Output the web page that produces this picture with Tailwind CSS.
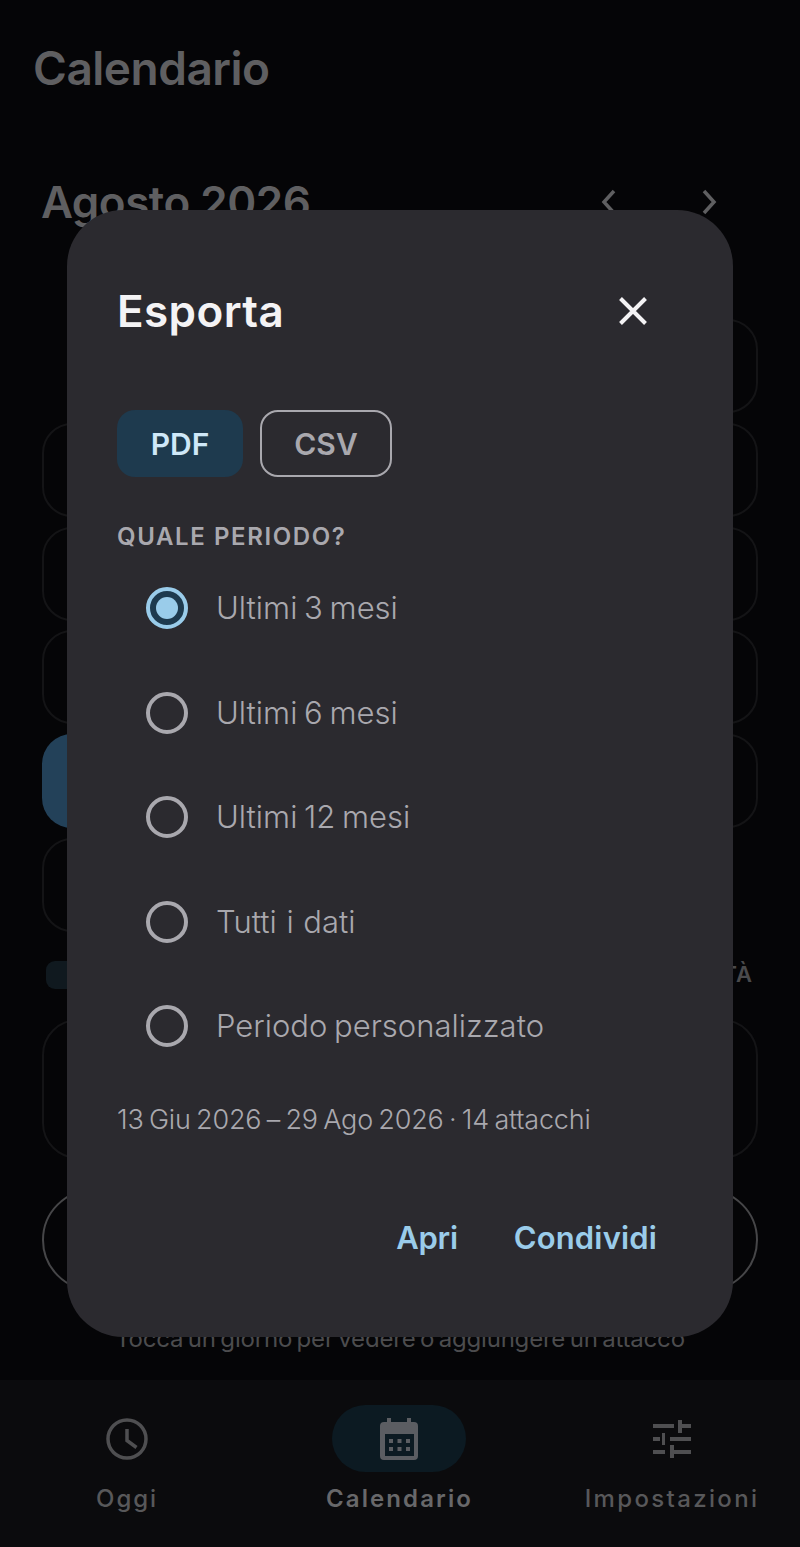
<!DOCTYPE html>
<html lang="it">
<head>
    <meta charset="UTF-8">
    <meta name="viewport" content="width=device-width, initial-scale=1.0">
    <title>Calendario</title>
    <script src="https://cdn.jsdelivr.net/npm/@tailwindcss/browser@4"></script>
</head>
<body class="bg-[#050507] font-['Inter',sans-serif]">
<div class="relative w-[800px] h-[1547px] overflow-hidden flex flex-col">

    <!-- Page behind the dialog -->
    <div class="flex-1 min-h-0 px-[42px] flex flex-col">
        <h1 class="-ml-[9px] pt-[41px] h-[130px] text-[46px] leading-[54px] font-semibold tracking-[-0.5px] text-[#5f5f61]">Calendario</h1>
        <div class="-ml-[1px] flex items-center justify-between h-[60px] mt-[42px] shrink-0">
            <span class="text-[44px] font-semibold tracking-[-0.5px] text-[#5f5f61]">Agosto 2026</span>
            <div class="flex gap-[76px] pr-[37px]">
                <svg class="w-6 h-8 text-[#5f5f61]" viewBox="0 0 24 32" fill="none" stroke="currentColor" stroke-width="3.5"><path d="M17 5 7 16l10 11"/></svg>
                <svg class="w-6 h-8 text-[#5f5f61]" viewBox="0 0 24 32" fill="none" stroke="currentColor" stroke-width="3.5"><path d="M7 5l10 11L7 27"/></svg>
            </div>
        </div>

        <div class="mt-[87px] grid grid-cols-7 gap-x-[10px] gap-y-[9.8px] auto-rows-[94px] shrink-0">
            <div class="col-start-6 rounded-[30px] border-2 border-[#141416]"></div>
            <div class="rounded-[30px] border-2 border-[#141416]"></div>
            <div class="col-start-1 rounded-[30px] border-2 border-[#141416]"></div>
            <div class="col-start-7 rounded-[30px] border-2 border-[#141416]"></div>
            <div class="col-start-1 rounded-[30px] border-2 border-[#141416]"></div>
            <div class="col-start-7 rounded-[30px] border-2 border-[#141416]"></div>
            <div class="col-start-1 rounded-[30px] border-2 border-[#141416]"></div>
            <div class="col-start-7 rounded-[30px] border-2 border-[#141416]"></div>
            <div class="col-start-1 rounded-[30px] bg-[#234159]"></div>
            <div class="col-start-7 rounded-[30px] border-2 border-[#141416]"></div>
            <div class="col-start-1 rounded-[30px] border-2 border-[#141416]"></div>
        </div>

        <div class="mt-[29px] h-[28px] flex items-center justify-between pl-[4px] pr-[5px] shrink-0">
            <span class="w-[60px] h-[28px] rounded-[9px] bg-[#10191f]"></span>
            <span class="text-[22px] font-semibold tracking-[1px] text-[#4a4a4c]">TÀ</span>
        </div>

        <div class="mt-[30px] h-[140px] shrink-0 rounded-[36px] border-2 border-[#141416]"></div>
        <div class="mt-[30px] h-[102px] shrink-0 rounded-full border-2 border-[#464648]"></div>
        <p class="mt-[33px] text-center text-[24px] leading-[30px] tracking-[-0.2px] [word-spacing:-2px] text-[#4c4c4e]">Tocca un giorno per vedere o aggiungere un attacco</p>
    </div>

    <!-- Bottom nav -->
    <nav class="h-[167px] shrink-0 bg-[#0b0b0d] grid grid-cols-[254px_290px_256px] pt-[25px]">
        <div class="flex flex-col items-center">
            <div class="h-[67px] flex items-center">
                <svg class="w-[48px] h-[48px] text-[#4f4f51]" viewBox="0 0 48 48" fill="none" stroke="currentColor" stroke-width="3.5"><circle cx="24" cy="24" r="19"/><path d="M24 14v11.5l9.5 7"/></svg>
            </div>
            <span class="mt-[11px] text-[24px] leading-[32px] font-medium tracking-[1.9px] text-[#58585a]">Oggi</span>
        </div>
        <div class="flex flex-col items-center">
            <div class="w-[134px] h-[67px] rounded-full bg-[#0c1a22] flex items-center justify-center">
                <svg class="w-[48px] h-[48px]" viewBox="0 0 48 48">
                    <path fill="#5b5d62" d="M12 3h4v4h16V3h4v4h3a4 4 0 0 1 4 4v30a4 4 0 0 1-4 4H9a4 4 0 0 1-4-4V11a4 4 0 0 1 4-4h3z"/>
                    <rect fill="#0c1a22" x="10" y="19" width="29" height="22"/>
                    <path fill="#5b5d62" d="M14 24h4v4h-4zm8.500 0h4v4h-4zm8.500 0h4v4h-4zM14 32h4v4h-4zm8.500 0h4v4h-4zm8.500 0h4v4h-4z"/>
                </svg>
            </div>
            <span class="mt-[11px] ml-[1px] text-[24px] leading-[32px] font-semibold tracking-[2.1px] text-[#68686a]">Calendario</span>
        </div>
        <div class="flex flex-col items-center">
            <div class="h-[67px] flex items-center">
                <svg class="w-[48px] h-[48px] text-[#4f4f51]" viewBox="0 0 48 48" fill="currentColor"><path d="M5 9h21v4H5zm25-4h4v4h9v4h-9v5h-4zM5 22h7v4H5zm9-4h3v12h-3zm8 4h21v4H22zM5 35h12v4H5zm17-5h4v5h17v4H26v4h-4z"/></svg>
            </div>
            <span class="mt-[11px] text-[24px] leading-[32px] font-medium tracking-[2.35px] text-[#58585a]">Impostazioni</span>
        </div>
    </nav>

    <!-- Export dialog -->
    <div class="absolute inset-0 flex items-center justify-center">
        <div class="w-[666px] h-[1127px] rounded-[56px] bg-[#2b2a2f] pl-[50px] pr-[76px] pt-[72px] flex flex-col">
            <div class="flex items-center justify-between h-[58px]">
                <h2 class="text-[44px] leading-[58px] font-semibold tracking-[0.4px] text-[#f4f3f5]">Esporta</h2>
                <svg class="w-[32px] h-[32px] text-[#f4f3f5] mr-[8px]" viewBox="0 0 32 32" fill="none" stroke="currentColor" stroke-width="4"><path d="M3.500 3.500l25 25M28.500 3.500l-25 25"/></svg>
            </div>

            <div class="mt-[70px] flex gap-[17px]">
                <span class="w-[126px] h-[67px] pt-[2px] rounded-[18px] bg-[#1e3a4e] flex items-center justify-center text-[30px] font-semibold text-[#cfe8f8]">PDF</span>
                <span class="w-[132px] h-[67px] pt-[2px] rounded-[18px] border-2 border-[#a9a8ae] flex items-center justify-center text-[30px] font-semibold text-[#a9a8ae]">CSV</span>
            </div>

            <p class="mt-[43px] text-[24px] leading-[34px] font-semibold tracking-[1.6px] text-[#a9a8ae]">QUALE PERIODO?</p>

            <div class="mt-[2px] pl-[29px] flex flex-col text-[31px] font-light [word-spacing:-2px] text-[#a9a8ae]">
                <label class="h-[104.5px] flex items-center gap-[29px]">
                    <span class="w-[42px] h-[42px] rounded-full border-[4px] border-[#9accea] flex items-center justify-center bg-[#1e3a4e]"><span class="w-[22px] h-[22px] rounded-full bg-[#9accea]"></span></span>
                    <span class="-ml-[1px]">Ultimi 3 mesi</span>
                </label>
                <label class="h-[104.5px] flex items-center gap-[29px]">
                    <span class="w-[42px] h-[42px] rounded-full border-[4px] border-[#a9a8ae]"></span>
                    <span class="-ml-[1px]">Ultimi 6 mesi</span>
                </label>
                <label class="h-[104.5px] flex items-center gap-[29px]">
                    <span class="w-[42px] h-[42px] rounded-full border-[4px] border-[#a9a8ae]"></span>
                    <span class="-ml-[1px]">Ultimi 12 mesi</span>
                </label>
                <label class="h-[104.5px] flex items-center gap-[29px]">
                    <span class="w-[42px] h-[42px] rounded-full border-[4px] border-[#a9a8ae]"></span>
                    <span class="-ml-[1px] [word-spacing:1px]">Tutti i dati</span>
                </label>
                <label class="h-[104.5px] flex items-center gap-[29px]">
                    <span class="w-[42px] h-[42px] rounded-full border-[4px] border-[#a9a8ae]"></span>
                    <span class="-ml-[1px]">Periodo personalizzato</span>
                </label>
            </div>

            <p class="mt-[23px] text-[27px] leading-[36px] font-light tracking-[-0.2px] [word-spacing:-2px] text-[#a9a8ae]">13 Giu 2026 – 29 Ago 2026 · 14 attacchi</p>

            <div class="mt-[80px] flex justify-end gap-[56px]">
                <span class="text-[31px] leading-[40px] font-semibold tracking-[-0.3px] text-[#9accea]">Apri</span>
                <span class="text-[31px] leading-[40px] font-semibold tracking-[0.15px] text-[#9accea]">Condividi</span>
            </div>
        </div>
    </div>
</div>
</body>
</html>
